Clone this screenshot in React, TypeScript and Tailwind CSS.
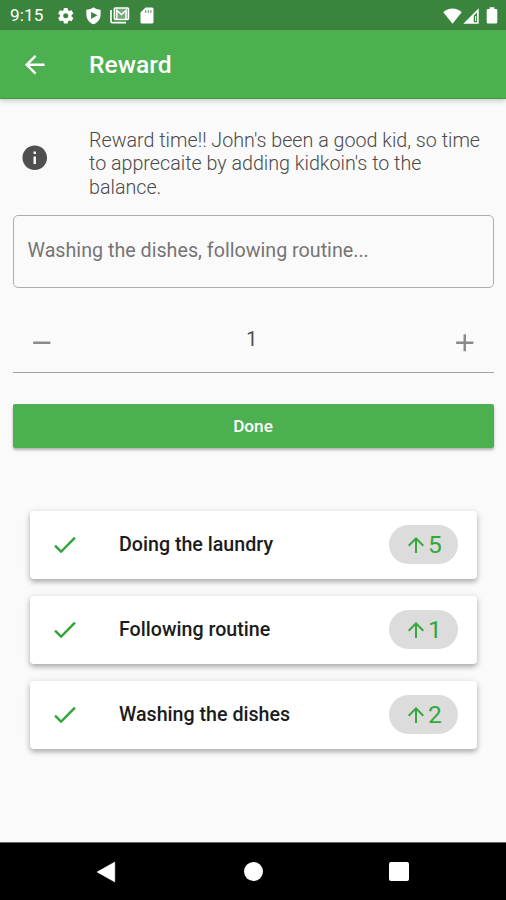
import type { ReactNode } from "react";

function Icon({ className, children }: { className: string; children: ReactNode }) {
  return (
    <svg viewBox="0 0 24 24" fill="currentColor" className={`shrink-0 ${className}`} aria-hidden="true">
      {children}
    </svg>
  );
}

function StatusBar() {
  return (
    <div className="flex h-[30px] shrink-0 items-center bg-[#3b843e] pt-[1px] pr-[6px] pl-[10px] text-white">
      <span className="w-[46px] pt-[1px] text-[17.200px] leading-none tracking-[0.1px]">9:15</span>
      <Icon className="size-[19.5px]">
        <path d="M19.14 12.94c.04-.3.06-.61.06-.94 0-.32-.02-.64-.07-.94l2.03-1.58a.49.49 0 0 0 .12-.61l-1.92-3.32a.488.488 0 0 0-.59-.22l-2.39.96c-.5-.38-1.03-.7-1.62-.94l-.36-2.54a.484.484 0 0 0-.48-.41h-3.84c-.24 0-.43.17-.47.41l-.36 2.54c-.59.24-1.13.57-1.62.94l-2.39-.96c-.22-.08-.47 0-.59.22L2.74 8.87c-.12.21-.08.47.12.61l2.03 1.58c-.05.3-.09.63-.09.94s.02.64.07.94l-2.03 1.58a.49.49 0 0 0-.12.61l1.92 3.32c.12.22.37.29.59.22l2.39-.96c.5.38 1.03.7 1.62.94l.36 2.54c.05.24.24.41.48.41h3.84c.24 0 .44-.17.47-.41l.36-2.54c.59-.24 1.13-.56 1.62-.94l2.39.96c.22.08.47 0 .59-.22l1.92-3.32c.12-.22.07-.47-.12-.61l-2.01-1.58zM12 15.1a3.1 3.1 0 1 1 0-6.2 3.1 3.1 0 0 1 0 6.2z" />
      </Icon>
      <Icon className="mb-[1px] ml-[8.5px] size-[19px]">
        <path fillRule="evenodd" d="M12 1.5c-2.5 2-5.300 3-9 3.300V11c0 5.500 3.700 10 9 12.200 5.300-2.200 9-6.700 9-12.200V4.800c-3.700-.3-6.500-1.300-9-3.300zM9 7.500l8 4.300-8 4.500z" />
      </Icon>
      <svg viewBox="0 0 20 17" className="ml-[7px] h-[17px] w-[20px] shrink-0" fill="none" stroke="currentColor" aria-hidden="true">
        <path d="M1 3v11.500q0 1.200 1.200 1.200H16" strokeWidth="1.700" />
        <rect x="4.300" y="1" width="14.200" height="11.500" rx="1" strokeWidth="1.500" fill="currentColor" fillOpacity="0.300" />
        <path d="M6.800 12V3.500l4.600 4 4.600-4V12" strokeWidth="1.500" />
      </svg>
      <svg viewBox="0 0 14 17" className="ml-[10px] h-[17px] w-[14px] shrink-0" fill="currentColor" aria-hidden="true">
        <path fillRule="evenodd" d="M5.500.5h6.500q1.500 0 1.500 1.500v13q0 1.500-1.500 1.500H2Q.5 16.500.5 15V5.500zM5.200 3.200v2.500h1v-2.500zM7.800 3.200v2.500h1v-2.500zM10.400 3.200v2.500h1v-2.500z" />
      </svg>
      <svg viewBox="0 0 19 16" className="ml-auto h-[16px] w-[19px] shrink-0" fill="currentColor" aria-hidden="true">
        <path d="M9.500 15.700.3 4.200Q4.500.5 9.500.5t9.200 3.700z" />
      </svg>
      <svg viewBox="0 0 16 16" className="ml-[1px] h-[16px] w-[16px] shrink-0" fill="currentColor" aria-hidden="true">
        <path fillRule="evenodd" d="M15.700.3v15.400H.3zM14 4.500l-3.300 3.300v6.400H14z" />
        <path d="M12.100 8h1v5h-1z" />
      </svg>
      <svg viewBox="0 0 12 17" className="mr-[2px] ml-[7px] h-[17px] w-[12px] shrink-0" fill="currentColor" aria-hidden="true">
        <path d="M3.700.3h4.600v1.700H10q1.300 0 1.300 1.300v12q0 1.300-1.300 1.300H2Q.7 16.600.7 15.300v-12Q.7 2 2 2h1.700z" />
      </svg>
    </div>
  );
}

const rewards = [
  { name: "Doing the laundry", coins: 5 },
  { name: "Following routine", coins: 1 },
  { name: "Washing the dishes", coins: 2 },
];

function RewardCard({ name, coins }: { name: string; coins: number }) {
  return (
    <li className="flex h-[68px] items-center rounded-[4px] bg-white pr-[19px] pl-[20px] shadow-[0_3px_5px_rgba(0,0,0,0.26),0_1px_8px_rgba(0,0,0,0.1)]">
      <Icon className="size-[29.5px] text-[#2fa536]">
        <path d="M9 16.170 4.830 12l-1.420 1.410L9 19 21 7l-1.410-1.410z" />
      </Icon>
      <span className="ml-[39.500px] pt-[1px] text-[19.650px] font-medium text-[#1c1c1c]">{name}</span>
      <span className="ml-auto flex h-[39px] w-[69px] items-center rounded-full bg-[#dcdcdc] pl-[15px] text-[#34a83b]">
        <Icon className="size-[24px]">
          <path d="m4 12 1.410 1.410L11 7.830V20h2V7.830l5.580 5.590L20 12l-8-8z" />
        </Icon>
        <span className="pt-[1px] text-[24.600px] leading-none">{coins}</span>
      </span>
    </li>
  );
}

export default function App() {
  return (
    <div className="flex h-[900px] w-[506px] flex-col overflow-hidden bg-[#fafafa] font-[Roboto,sans-serif]">
      <StatusBar />
      <header className="z-10 flex h-[69px] shrink-0 items-center border-b border-[#36a13c] bg-[#4caf50] pt-[2px] pl-[20px] text-white shadow-[0_2px_5px_rgba(0,0,0,0.2)]">
        <Icon className="size-[29.500px]">
          <path d="M20 11H7.830l5.590-5.590L12 4l-8 8 8 8 1.410-1.410L7.830 13H20z" />
        </Icon>
        <h1 className="ml-[39.500px] pt-[1px] text-[24.600px] font-medium">Reward</h1>
      </header>

      <main className="flex min-h-0 flex-1 flex-col px-[12.500px]">
        <div className="mt-[29px] flex h-[71px] items-center pl-[7.500px]">
          <Icon className="mb-[12px] size-[29.500px] text-[#4f4f4f]">
            <path d="M12 2C6.480 2 2 6.480 2 12s4.480 10 10 10 10-4.480 10-10S17.520 2 12 2zm1 15h-2v-6h2v6zm0-8h-2V7h2v2z" />
          </Icon>
          <p className="ml-[39.500px] pt-[1px] text-[19.700px] leading-[23.400px] font-light whitespace-nowrap text-[#4a4a4a]">
            Reward time!! John's been a good kid, so time
            <br />
            to apprecaite by adding kidkoin's to the
            <br />
            balance.
          </p>
        </div>

        <div className="mt-[16px] flex h-[73px] items-center rounded-[5px] border-[1.500px] border-[#adadad] pb-[2px] pl-[14px] text-[19.700px] text-[#757575]">
          Washing the dishes, following routine...
        </div>

        <div className="mt-[33px] flex h-[52px] items-center justify-between border-b-[1.500px] border-[#a3a3a3] pr-[14px] pl-[14.500px] text-[#8a8a8a]">
          <Icon className="mt-[-7px] size-[29.500px]">
            <path d="M19 13H5v-2h14z" />
          </Icon>
          <span className="mt-[-14px] mr-[3px] text-[19.700px] text-[#4f4f4f]">1</span>
          <Icon className="mt-[-7px] size-[29.500px]">
            <path d="M19 13h-6v6h-2v-6H5v-2h6V5h2v6h6z" />
          </Icon>
        </div>

        <button className="mt-[31px] h-[44px] shrink-0 rounded-[2px] bg-[#4caf50] pt-[2px] text-[17.200px] font-medium text-white shadow-[0_2px_3px_rgba(0,0,0,0.3)]">
          Done
        </button>

        <ul className="mr-[16.500px] ml-[17.500px] mt-[62.500px] flex flex-col gap-[17px]">
          {rewards.map((reward) => (
            <RewardCard key={reward.name} name={reward.name} coins={reward.coins} />
          ))}
        </ul>
      </main>

      <nav className="grid h-[58px] shrink-0 grid-cols-[146px_146px_146px] items-center justify-center border-t border-[#666666] bg-black text-white">
        <svg viewBox="0 0 20 22" className="ml-[62px] h-[22px] w-[20px]" fill="currentColor" aria-hidden="true">
          <path d="M18.800 1v20L1 11z" stroke="currentColor" strokeWidth="0.500" strokeLinejoin="round" />
        </svg>
        <span className="size-[19px] justify-self-center rounded-full bg-white" />
        <span className="size-[19.500px] justify-self-center rounded-[2px] bg-white" />
      </nav>
    </div>
  );
}
